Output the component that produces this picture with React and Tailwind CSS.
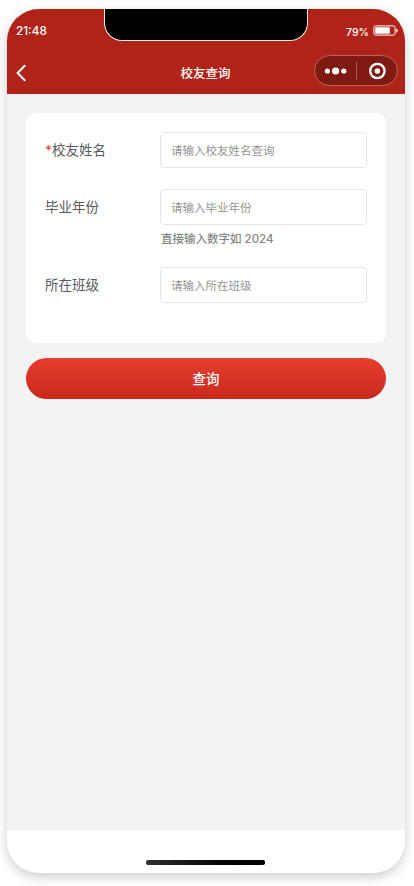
import React, { useState } from 'react';

const FIELDS = [
  { key: 'name', label: '校友姓名', placeholder: '请输入校友姓名查询', required: true },
  { key: 'year', label: '毕业年份', placeholder: '请输入毕业年份', hint: '直接输入数字如 2024' },
  { key: 'class', label: '所在班级', placeholder: '请输入所在班级' }
];

function StatusBar() {
  return (
    <div className="flex h-[42px] items-start justify-between">
      <span className="w-[97px] pl-[9px] pt-[14px] font-['Inter','Noto_Sans_CJK_SC',sans-serif] text-[11.75px] font-medium leading-4 text-white">
        21:48
      </span>
      <div className="h-8 w-[204px] rounded-b-[18px] border border-t-0 border-white/90 bg-black"></div>
      <div className="flex w-[97px] items-start justify-end gap-1 pr-[6px] pt-[15px]">
        <span className="mt-px font-['Inter','Noto_Sans_CJK_SC',sans-serif] text-[10.5px] font-medium leading-4 text-white">79%</span>
        <svg className="mt-[1px]" width="26" height="11" viewBox="0 0 26 11" fill="none">
          <rect x="0.9" y="0.9" width="21.2" height="9.2" rx="1.8" stroke="white" strokeWidth="1" />
          <rect x="2.2" y="2.2" width="14.6" height="6.6" rx="0.8" fill="white" />
          <path d="M23.3 3.5c.9.2 1.4.9 1.4 2s-.5 1.8-1.4 2z" fill="white" />
        </svg>
      </div>
    </div>
  );
}

function NavBar() {
  return (
    <div className="flex h-[43px] items-center border-t border-[#a82218] pl-[9px] pr-[7px]">
      <div className="flex-1">
        <svg className="-mt-[1px]" width="11" height="18" viewBox="0 0 11 18" fill="none">
          <path d="M8.7 1.8 1.6 9l7.1 7.2" stroke="white" strokeWidth="2" strokeLinecap="round" />
        </svg>
      </div>
      <h1 className="-ml-[3px] text-[12.5px] font-medium leading-4 text-white">校友查询</h1>
      <div className="-mt-[5px] flex flex-1 justify-end">
        <div className="flex h-[31px] w-[84px] items-center rounded-full border border-[#b9655e] bg-[#7f1a13]">
          <svg width="82" height="29" viewBox="0 0 82 29" fill="none">
            <circle cx="12.4" cy="15" r="2.6" fill="white" />
            <circle cx="20.6" cy="15" r="3.6" fill="white" />
            <circle cx="28.8" cy="15" r="2.6" fill="white" />
            <path d="M41.5 6v18" stroke="#a9605a" />
            <circle cx="62.4" cy="15" r="7.2" stroke="white" strokeWidth="2.3" />
            <circle cx="62.4" cy="15" r="2.8" fill="white" />
          </svg>
        </div>
      </div>
    </div>
  );
}

export default function App() {
  const [values, setValues] = useState({});

  const handleChange = (key, value) => {
    setValues(prev => ({ ...prev, [key]: value }));
  };

  return (
    <div className="h-[886px] w-[414px] overflow-hidden bg-white pl-[7px] pt-[9px] font-['Noto_Sans_CJK_SC',sans-serif]">
      <div className="flex h-[864px] w-[398px] flex-col overflow-hidden rounded-[32px] bg-[#f3f3f3] shadow-[0_4px_12px_rgba(0,0,0,0.2)]">
        <header className="bg-[#af2318]">
          <StatusBar />
          <NavBar />
        </header>

        <main className="flex-1 px-[19px] pt-[19px]">
          <div className="flex h-[230px] flex-col gap-[21px] rounded-[10px] bg-white px-[19px] pt-[19px]">
            {FIELDS.map(f => (
              <div key={f.key} className="flex">
                <label htmlFor={f.key} className="w-[115px] text-[13.5px] leading-[34px] text-[#58595d]">
                  {f.required && <span className="font-['Inter',sans-serif] font-medium text-[#e5443f]">*</span>}
                  {f.label}
                </label>
                <div className="flex-1">
                  <input
                    id={f.key}
                    value={values[f.key] || ''}
                    placeholder={f.placeholder}
                    onChange={e => handleChange(f.key, e.target.value)}
                    className="block h-[36px] w-full rounded-[4px] border border-[#e6e6e6] px-[10px] text-[11.5px] text-[#58595d] outline-none placeholder:text-[#949494]"
                  />
                  {f.hint && (
                    <p className="mt-[6px] h-[15px] pl-px font-['Inter','Noto_Sans_CJK_SC',sans-serif] text-[11.5px] font-medium leading-4 text-[#858585]">
                      {f.hint}
                    </p>
                  )}
                </div>
              </div>
            ))}
          </div>

          <button className="mt-[15px] block h-[41px] w-full rounded-full bg-linear-to-b from-[#e83d30] to-[#c8291c] pb-px text-[13.5px] font-medium text-white">
            查询
          </button>
        </main>

        <footer className="flex h-[43px] justify-center bg-white pr-[1px] pt-[30px]">
          <div className="h-[5px] w-[119px] rounded-[2px] bg-linear-to-r from-[#303030] to-black"></div>
        </footer>
      </div>
    </div>
  );
}
